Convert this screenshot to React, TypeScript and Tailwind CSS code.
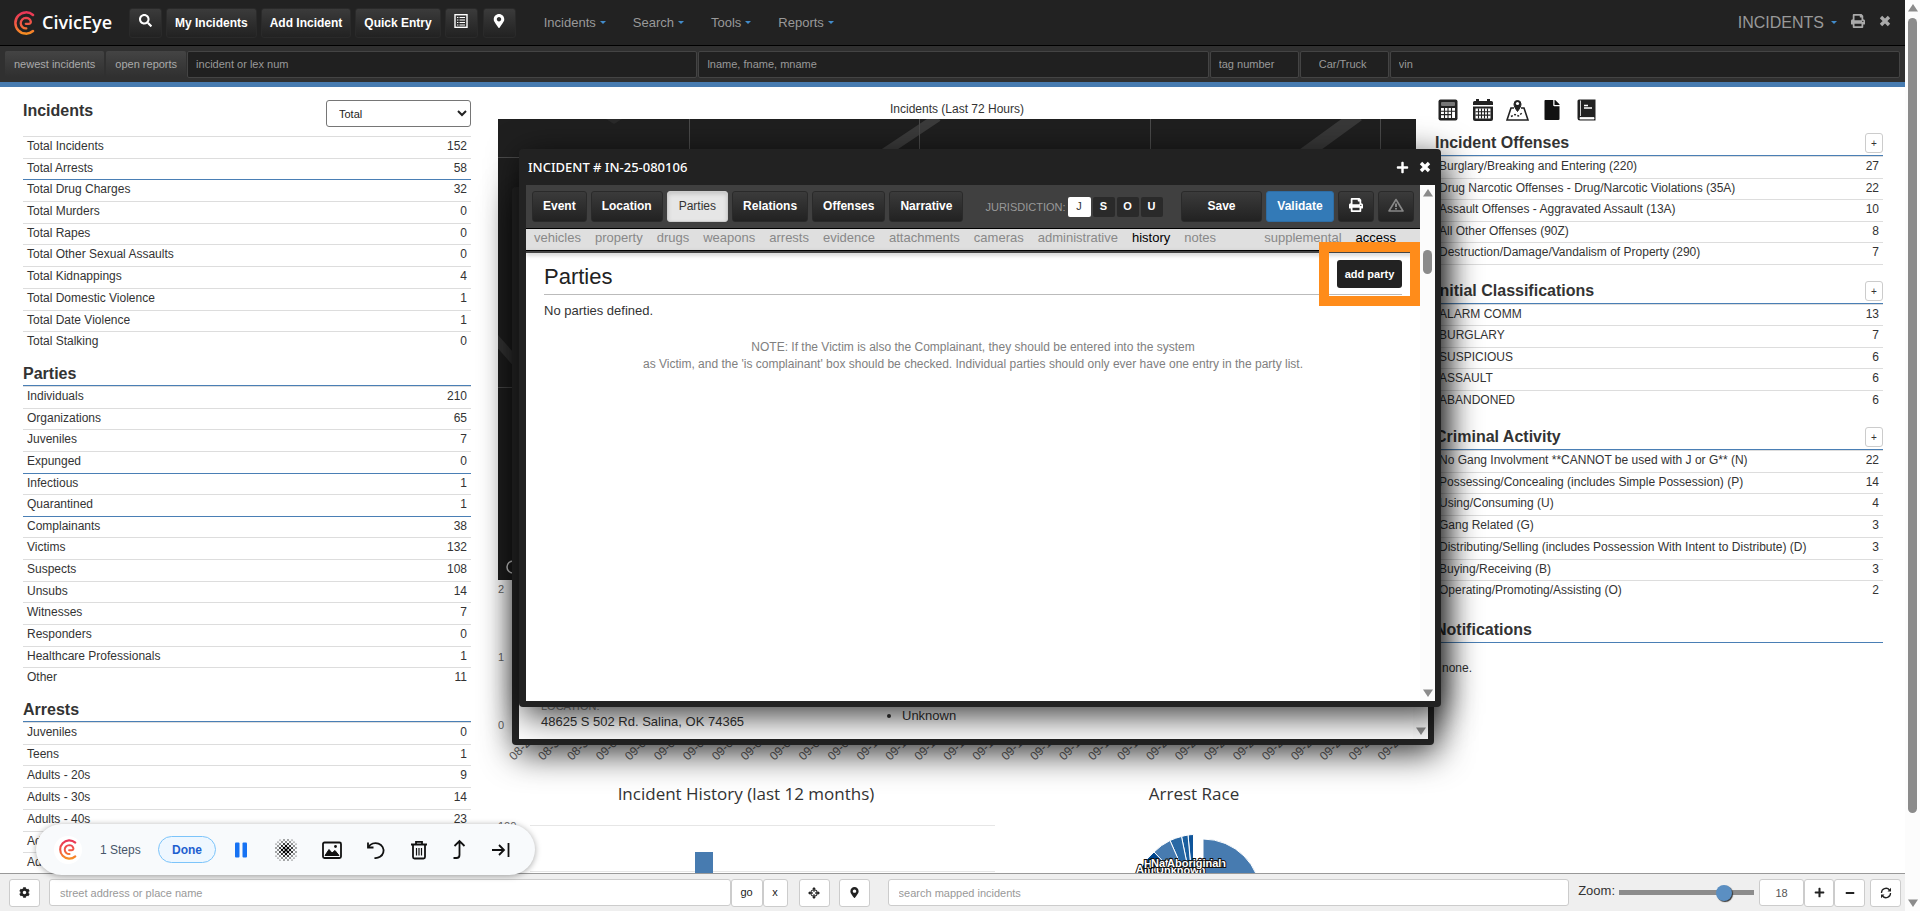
import React from "react";
import {
  FaSearch,
  FaMapMarkerAlt,
  FaPrint,
  FaPlus,
  FaMinus,
  FaCog,
  FaFile,
} from "react-icons/fa";

type Row = [label: string, value: number, accent?: boolean];

const incidentRows: Row[] = [
  ["Total Incidents", 152],
  ["Total Arrests", 58],
  ["Total Drug Charges", 32, true],
  ["Total Murders", 0],
  ["Total Rapes", 0],
  ["Total Other Sexual Assaults", 0],
  ["Total Kidnappings", 4],
  ["Total Domestic Violence", 1],
  ["Total Date Violence", 1],
  ["Total Stalking", 0],
];

const partyRows: Row[] = [
  ["Individuals", 210],
  ["Organizations", 65],
  ["Juveniles", 7],
  ["Expunged", 0],
  ["Infectious", 1, true],
  ["Quarantined", 1],
  ["Complainants", 38, true],
  ["Victims", 132],
  ["Suspects", 108],
  ["Unsubs", 14],
  ["Witnesses", 7],
  ["Responders", 0],
  ["Healthcare Professionals", 1],
  ["Other", 11],
];

const arrestRows: Row[] = [
  ["Juveniles", 0],
  ["Teens", 1],
  ["Adults - 20s", 9],
  ["Adults - 30s", 14],
  ["Adults - 40s", 23],
  ["Adults - 50s", 8],
  ["Adults - 60s", 3],
];

const offenseRows: Row[] = [
  ["Burglary/Breaking and Entering (220)", 27],
  ["Drug Narcotic Offenses - Drug/Narcotic Violations (35A)", 22],
  ["Assault Offenses - Aggravated Assault (13A)", 10],
  ["All Other Offenses (90Z)", 8],
  ["Destruction/Damage/Vandalism of Property (290)", 7],
];

const classificationRows: Row[] = [
  ["ALARM COMM", 13],
  ["BURGLARY", 7],
  ["SUSPICIOUS", 6],
  ["ASSAULT", 6],
  ["ABANDONED", 6],
];

const activityRows: Row[] = [
  ["No Gang Involvment **CANNOT be used with J or G** (N)", 22],
  ["Possessing/Concealing (includes Simple Possession) (P)", 14],
  ["Using/Consuming (U)", 4],
  ["Gang Related (G)", 3],
  ["Distributing/Selling (includes Possession With Intent to Distribute) (D)", 3],
  ["Buying/Receiving (B)", 3],
  ["Operating/Promoting/Assisting (O)", 2],
];

const chartDates = [
  "08-29", "08-30", "08-31",
  ...Array.from({ length: 28 }, (_, i) => "09-" + String(i + 1).padStart(2, "0")),
];

const darkButton =
  "flex items-center justify-center rounded-[3px] border border-[#2a2a2a] bg-linear-to-b from-[#3b3b3b] to-[#222] text-xs font-bold text-white";
const lightButton =
  "flex h-7 items-center justify-center rounded-[3px] border border-[#ccc] bg-white text-[11px] text-[#222]";

function Logo({ className }: { className: string }) {
  return (
    <svg viewBox="0 0 21 24" className={className} fill="none" strokeLinecap="round" aria-hidden="true">
      <defs>
        <linearGradient id="civic" gradientUnits="userSpaceOnUse" x1="0" y1="0" x2="0" y2="24">
          <stop offset="0" stopColor="#e8325a" />
          <stop offset="0.55" stopColor="#f15a44" />
          <stop offset="1" stopColor="#f7941e" />
        </linearGradient>
      </defs>
      <path d="M19 4A10.630 10.630 0 1 0 19 20" stroke="url(#civic)" strokeWidth="2.500" />
      <path
        d="M11.800 12.800H14.500Q17 12.800 16.800 10.600A5 5 0 0 0 12 6.900A5.400 5.400 0 0 0 6.700 12.400A5.200 5.200 0 0 0 12.300 17.300"
        stroke="url(#civic)"
        strokeWidth="2.300"
      />
    </svg>
  );
}

function Caret() {
  return (
    <svg viewBox="0 0 6 3" className="h-[3px] w-1.5" aria-hidden="true">
      <path d="M0 0H6L3 3Z" fill="#428bca" />
    </svg>
  );
}

function CrossIcon() {
  return (
    <svg viewBox="0 0 12 12" className="h-3 w-3" aria-hidden="true">
      <path d="M2 2L10 10M10 2L2 10" stroke="currentColor" strokeWidth="3.400" />
    </svg>
  );
}

function ScrollArrow({ down = false }: { down?: boolean }) {
  return (
    <svg viewBox="0 0 10 8" className="h-2 w-2.5 shrink-0" aria-hidden="true">
      <path d={down ? "M0 .5H10L5 8Z" : "M0 7.5H10L5 0Z"} fill="#8b8b8b" />
    </svg>
  );
}

function ListIcon() {
  return (
    <svg viewBox="0 0 14 14" className="h-3.5 w-3.5" fill="none" stroke="#fff" aria-hidden="true">
      <rect x="1" y=".7" width="12" height="12.6" strokeWidth="1.4" />
      <path d="M3 3.5H4.4M3 6H4.4M3 8.5H4.4M3 11H4.4M5.5 3.5H11M5.5 6H11M5.5 8.5H11M5.5 11H11" />
    </svg>
  );
}

function StatTable({ label, rows, height, closed = false }: { label: string; rows: Row[]; height: string; closed?: boolean }) {
  return (
    <table
      aria-label={label}
      className={`w-full border-separate border-spacing-0 text-xs leading-[18px] text-[#333] ${height} ${closed ? "border-b border-[#ddd]" : ""}`}
    >
      <tbody>
        {rows.map(([name, value, accent]) => {
          const line = accent ? "border-[#4a7fb5]" : "border-[#ddd]";
          return (
            <tr key={name}>
              <td className={`border-t py-0 pl-1 align-top ${line}`}>{name}</td>
              <td className={`border-t py-0 pr-1 text-right align-top ${line}`}>{value}</td>
            </tr>
          );
        })}
      </tbody>
    </table>
  );
}

function LeftHeading({ children }: { children: string }) {
  return (
    <h2 className="border-b border-[#4a7fb5] pt-[11px] pb-px text-base leading-5 font-bold text-[#333]">{children}</h2>
  );
}

function RightHeading({ title, expand = true }: { title: string; expand?: boolean }) {
  return (
    <div className="flex items-center justify-between border-b border-[#4a7fb5] pb-0.5">
      <h2 className="text-base leading-5 font-bold text-[#333]">{title}</h2>
      {expand && (
        <button
          type="button"
          aria-label={`Expand ${title}`}
          className="flex h-5 w-[18px] items-center justify-center rounded-[3px] border border-[#ccc] bg-white text-[10px] text-[#333]"
        >
          +
        </button>
      )}
    </div>
  );
}

function Header() {
  const field =
    "h-[27px] min-w-0 rounded-[2px] border border-[#444] bg-[#202020] px-2 text-[11px] text-[#999] outline-none placeholder:text-[#999]";
  return (
    <header>
      <div className="flex h-[46px] items-center border-b border-black bg-[#222] pl-3.5 pr-3.5">
        <Logo className="h-6 w-[21px]" />
        <span className="ml-[7px] w-[80px] font-['Open_Sans',sans-serif] text-[18px] font-semibold text-white">CivicEye</span>
        <div className="ml-[7px] flex items-center gap-1">
          <button type="button" aria-label="Search" className={`${darkButton} h-[30px] w-[33px] pb-1`}>
            <FaSearch size={13} />
          </button>
          <button type="button" className={`${darkButton} h-[30px] px-2`}>My Incidents</button>
          <button type="button" className={`${darkButton} h-[30px] px-2`}>Add Incident</button>
          <button type="button" className={`${darkButton} h-[30px] px-2`}>Quick Entry</button>
          <button type="button" aria-label="List" className={`${darkButton} h-[30px] w-[33px] pb-1`}>
            <ListIcon />
          </button>
          <button type="button" aria-label="Map" className={`${darkButton} ml-px h-[30px] w-[33px] pb-1`}>
            <FaMapMarkerAlt size={14} />
          </button>
        </div>
        <nav className="ml-7 flex gap-[27px] text-[13px] text-[#999]">
          {["Incidents", "Search", "Tools", "Reports"].map((item) => (
            <a key={item} href="#" className="flex items-center gap-1">
              {item}
              <Caret />
            </a>
          ))}
        </nav>
        <div className="ml-auto flex items-center text-[#999]">
          <a href="#" className="flex items-center gap-[7px] text-base">
            INCIDENTS
            <Caret />
          </a>
          <button type="button" aria-label="Print" className="ml-3.5 pb-1 text-[#aaa]">
            <FaPrint size={14} />
          </button>
          <button type="button" aria-label="Close" className="ml-3.5 pb-1 text-[#aaa]">
            <CrossIcon />
          </button>
        </div>
      </div>
      <div className="flex h-9 items-center gap-px bg-[#303030] px-[5px]">
        <button type="button" className="mr-px h-[26px] rounded-[2px] bg-linear-to-b from-[#444] to-[#303030] px-[9px] text-[11px] text-[#aaa]">
          newest incidents
        </button>
        <button type="button" className="h-[26px] rounded-[2px] bg-linear-to-b from-[#444] to-[#303030] px-[9px] text-[11px] text-[#aaa]">
          open reports
        </button>
        <input aria-label="incident or lex num" placeholder="incident or lex num" className={`${field} flex-1`} />
        <input aria-label="name" placeholder="lname, fname, mname" className={`${field} flex-1`} />
        <input aria-label="tag number" placeholder="tag number" className={`${field} w-[89px]`} />
        <select aria-label="vehicle type" className={`${field} w-[89px] appearance-none pl-[18px] text-[#888]`}>
          <option>Car/Truck</option>
        </select>
        <input aria-label="vin" placeholder="vin" className={`${field} flex-1`} />
      </div>
      <div className="h-[5px] bg-[#477bb0]" />
    </header>
  );
}

function MapView() {
  return (
    <svg viewBox="0 0 918 461" className="block w-full" preserveAspectRatio="none" role="img" aria-label="Incident map">
      <rect width="918" height="461" fill="#1f1f1f" />
      <g stroke="#353535" strokeWidth="9">
        <path d="M440 -2L380 38" stroke="#3b3b3b" />
        <path d="M860 -4L794 44" stroke="#383838" strokeWidth="13" />
        <path d="M-6 216L40 268" />
      </g>
      <path d="M108 0L116 5L124 0Z" fill="#2a2a2a" />
      <g stroke="#4a4a4a">
        <path d="M191.500 0V40M421.500 0V40M652.500 0V40M882.500 0V40M0 38.500H30M0 268.500H30" />
      </g>
      <circle cx="15" cy="448" r="6" fill="none" stroke="#ddd" strokeWidth="1.500" />
    </svg>
  );
}

function DailyChart() {
  return (
    <svg viewBox="0 0 918 196" className="block w-full font-['Liberation_Sans',sans-serif] text-[11px]" role="img" aria-label="Incidents per day">
      <g fill="#666">
        <text x="0" y="13">2</text>
        <text x="0" y="81">1</text>
        <text x="0" y="149">0</text>
        {chartDates.map((date, i) => {
          const x = 16 + i * 28.95;
          return (
            <text key={date} x={x} y="181" fontSize="12" transform={`rotate(-45 ${x} 181)`}>
              {date}
            </text>
          );
        })}
      </g>
    </svg>
  );
}

function HistoryChart() {
  return (
    <svg viewBox="0 0 500 130" className="block w-full" role="img" aria-label="Incident history">
      <text x="248" y="24" textAnchor="middle" fontSize="17" fill="#333" className="font-['Open_Sans',sans-serif]">
        Incident History (last 12 months)
      </text>
      <text x="0" y="54" fontSize="11" fill="#666" className="font-['Liberation_Sans',sans-serif]">100</text>
      <path d="M32 49.500H497M32 95.500H497" stroke="#e6e6e6" />
      <rect x="197" y="76" width="18" height="54" fill="#477bb0" />
    </svg>
  );
}

function RaceChart() {
  return (
    <svg viewBox="0 0 418 130" className="block w-full" role="img" aria-label="Arrest race">
      <text x="196" y="24" textAnchor="middle" fontSize="17" fill="#333" className="font-['Open_Sans',sans-serif]">
        Arrest Race
      </text>
      <g stroke="#fff" strokeWidth="1">
        <path d="M205 121V63A58 58 0 0 1 263 121Z" fill="#477bb0" />
        <path d="M195.500 117V58.500A59 59 0 0 0 190 59Z" fill="#0f559b" />
        <path d="M195 117L190 59A59 59 0 0 0 183.500 60.500Z" fill="#1b5f9f" />
        <path d="M195 117L183.500 60.500A59 59 0 0 0 172 64.500Z" fill="#2a69a5" />
        <path d="M195 117L172 64.500A59 59 0 0 0 156 76Z" fill="#477bb0" />
        <path d="M195 117L156 76A59 59 0 0 0 136 112V118Z" fill="#00468e" />
      </g>
      <g
        fill="#fff"
        stroke="#111"
        strokeWidth="2"
        paintOrder="stroke"
        fontSize="11"
        fontWeight="700"
        className="font-['Liberation_Sans',sans-serif]"
      >
        <text x="138" y="97">American</text>
        <text x="158" y="98">Unknown</text>
        <text x="228" y="91" textAnchor="end">Asian</text>
        <text x="146" y="92">H</text>
        <text x="153" y="91">Nat</text>
        <text x="169" y="91">Aboriginal</text>
      </g>
    </svg>
  );
}

function CalculatorIcon() {
  return (
    <svg viewBox="0 0 20 22" className="h-[22px] w-5" aria-hidden="true">
      <rect x=".5" y=".5" width="19" height="21" rx="2" fill="#222" />
      <rect x="3" y="3" width="14" height="4" rx="1" fill="#777" />
      <path d="M3 9H17V19H3Z" fill="#fff" />
      <path d="M6.500 9V19M10 9V19M13.500 9V19M3 12.300H17M3 15.600H13.500" stroke="#222" strokeWidth="1.100" />
    </svg>
  );
}

function CalendarIcon() {
  return (
    <svg viewBox="0 0 20 22" className="h-[22px] w-5" aria-hidden="true">
      <path d="M0 3.500Q0 2 1.500 2H3V0H6V2H14V0H17V2H18.500Q20 2 20 3.500V6H0Z" fill="#222" />
      <path d="M0 7.500H20V20Q20 22 18 22H2Q0 22 0 20Z" fill="#222" />
      <path d="M2.500 9.500H17.500V19.500H2.500Z" fill="#fff" />
      <path d="M5.500 9.500V19.500M8.500 9.500V19.500M11.500 9.500V19.500M14.500 9.500V19.500M2.500 12.800H17.500M2.500 16.100H17.500" stroke="#222" strokeWidth="1.100" />
    </svg>
  );
}

function MapPinIcon() {
  return (
    <svg viewBox="0 0 23 22" className="h-[22px] w-[23px]" fill="none" stroke="#222" aria-hidden="true">
      <path d="M8 9H5L1 21H22L18 9H15" strokeWidth="1.600" />
      <path d="M11.500 12.500C9 9 8 7 8 5A3.500 3.500 0 0 1 15 5C15 7 14 9 11.500 12.500Z" fill="#222" />
      <circle cx="11.500" cy="4.500" r="1.600" fill="#fff" stroke="none" />
      <path d="M5 17.500L9 15.500L12.500 17L16 14" strokeWidth="1.500" strokeDasharray="2 1.500" />
    </svg>
  );
}

function BookIcon() {
  return (
    <svg viewBox="0 0 19 22" className="h-[22px] w-[19px]" aria-hidden="true">
      <path d="M2 .5H18.500V21.500H3Q.5 21.500 .5 19V2Q.5 .5 2 .5Z" fill="#222" />
      <path d="M3.500 1.500V17M3 18.500H17V20H3Z" fill="#fff" stroke="#fff" strokeWidth=".8" />
      <path d="M7 6.500H11M7 9H15" stroke="#fff" strokeWidth="1.300" />
    </svg>
  );
}

function ModalFrame({
  title,
  children,
  className,
  thumb = false,
}: {
  title: string;
  children: React.ReactNode;
  className: string;
  thumb?: boolean;
}) {
  return (
    <section
      role="dialog"
      aria-label={title}
      className={`absolute flex h-[558px] w-[922px] flex-col rounded-[4px] bg-[#222] pb-1.5 shadow-[4px_8px_34px_rgba(0,0,0,0.8)] ${className}`}
    >
      <div className="flex h-9 shrink-0 items-center justify-between pr-2.5 pl-[9px] text-white">
        <h2 className="pt-0.5 font-['Noto_Sans',sans-serif] text-[13px] font-medium">{title}</h2>
        <div className="flex items-center gap-2.5">
          <button type="button" aria-label="New window">
            <FaPlus size={13} />
          </button>
          <button type="button" aria-label="Close window">
            <CrossIcon />
          </button>
        </div>
      </div>
      <div className="mr-1.5 ml-[7px] flex min-h-0 flex-1 bg-white">
        <div className="flex min-w-0 flex-1 flex-col">{children}</div>
        <div className="flex w-[15px] flex-col items-center justify-between bg-[#fcfcfc] py-1">
          <ScrollArrow />
          {thumb && <span className="mt-[53px] mb-auto h-6 w-[9px] rounded-full bg-[#8b8b8b]" />}
          <ScrollArrow down />
        </div>
      </div>
    </section>
  );
}

function EventModal() {
  return (
    <ModalFrame title="EVENT" className="top-[187px] left-[512px]">
      <div className="h-[43px] shrink-0 bg-[#404040]" />
      <div className="mt-auto flex items-end pb-[5px] pl-[22px] text-[13px] leading-4 text-[#333]">
        <div className="w-[345px]">
          <p className="text-[11px] text-[#888]">LOCATION:</p>
          <p className="pb-1">48625 S 502 Rd. Salina, OK 74365</p>
        </div>
        <ul className="list-disc pb-2.5 pl-4">
          <li>Unknown</li>
        </ul>
      </div>
    </ModalFrame>
  );
}

function IncidentModal() {
  const tabs = ["Event", "Location", "Parties", "Relations", "Offenses", "Narrative"];
  const links = [
    "vehicles", "property", "drugs", "weapons", "arrests", "evidence",
    "attachments", "cameras", "administrative", "history", "notes",
  ];
  return (
    <ModalFrame title="INCIDENT # IN-25-080106" className="top-[149px] left-[519px]" thumb>
      <div className="flex h-11 shrink-0 items-center border-b border-black bg-[#404040] px-1.5">
        <div className="flex gap-1">
          {tabs.map((tab) =>
            tab === "Parties" ? (
              <button
                key={tab}
                type="button"
                aria-current="page"
                className="h-[31px] rounded-[3px] border border-[#ccc] bg-[#e6e6e6] px-[11px] pb-0.5 text-xs font-medium text-[#333] shadow-[inset_0_2px_4px_rgba(0,0,0,0.15)]"
              >
                {tab}
              </button>
            ) : (
              <button key={tab} type="button" className={`${darkButton} h-[31px] px-2.5 pb-0.5`}>
                {tab}
              </button>
            ),
          )}
        </div>
        <div className="ml-[22px] flex items-center gap-0.5 text-[11px]">
          <span className="pt-0.5 text-[#999]">JURISDICTION:</span>
          <button type="button" className="h-5 w-[23px] rounded-[2px] bg-white text-[#333]">J</button>
          {["S", "O", "U"].map((code) => (
            <button key={code} type="button" className="h-5 w-[22px] rounded-[2px] bg-[#2a2a2a] font-bold text-white">
              {code}
            </button>
          ))}
        </div>
        <div className="ml-auto flex gap-1">
          <button type="button" className={`${darkButton} h-[31px] w-[81px] pb-0.5`}>Save</button>
          <button type="button" className="h-[31px] w-[68px] rounded-[3px] border border-[#2e6da4] bg-[#337ab7] pb-0.5 text-xs font-bold text-white">
            Validate
          </button>
          <button type="button" aria-label="Print" className={`${darkButton} h-[31px] w-9 pb-1`}>
            <FaPrint size={14} />
          </button>
          <button type="button" aria-label="Warnings" className={`${darkButton} h-[31px] w-9 pb-1`}>
            <svg viewBox="0 0 16 14" className="h-3.5 w-4" fill="none" stroke="#888" aria-hidden="true">
              <path d="M8 1.500L15 13H1Z" strokeWidth="1.600" strokeLinejoin="round" />
              <path d="M8 5.500V9M8 10V11.500" strokeWidth="2" />
            </svg>
          </button>
        </div>
      </div>
      <nav className="flex h-[21px] shrink-0 gap-3.5 bg-[#dfdfdf] pr-6 pl-2 text-[13px] leading-[17px] text-[#888]">
        {links.map((link) => (
          <a key={link} href="#" className={link === "history" ? "text-black" : ""}>
            {link}
          </a>
        ))}
        <a href="#" className="ml-auto">supplemental</a>
        <a href="#" className="text-black">access</a>
      </nav>
      <div className="h-[3px] shrink-0 border-t border-black bg-[#444] shadow-[0_2px_4px_rgba(0,0,0,0.25)]" />
      <div className="pr-[18px] pl-[18px]">
        <div className="flex items-start justify-between border-b border-[#bbb] pt-[7px] pb-[5px]">
          <h3 className="pt-[5px] text-[22px] leading-6 text-[#222]">Parties</h3>
          <div className="relative h-7">
            <button type="button" className="h-7 w-[65px] rounded-[3px] bg-[#222] text-[11px] font-bold text-white">
              add party
            </button>
            <span className="pointer-events-none absolute -inset-[18px] border-[10px] border-[#ff8c1a]" />
          </div>
        </div>
        <p className="pt-[7px] text-[13px] leading-[18px] text-[#333]">No parties defined.</p>
        <p className="pt-[19px] text-center text-xs leading-[17px] text-[#808080]">
          NOTE: If the Victim is also the Complainant, they should be entered into the system
          <br />
          as Victim, and the 'is complainant' box should be checked. Individual parties should only ever have one entry in the party list.
        </p>
      </div>
    </ModalFrame>
  );
}

function DotsIcon() {
  const dots: React.ReactNode[] = [];
  for (let r = 0; r < 11; r++) {
    for (let c = 0; c < 11; c++) {
      const d = Math.hypot(r - 5, c - 5);
      if (d > 6 || (r + c) % 2) continue;
      dots.push(<circle key={`${r}-${c}`} cx={c * 2 + 1} cy={r * 2 + 1} r={1.55 - d * 0.18} />);
    }
  }
  return (
    <svg viewBox="0 0 22 22" className="h-[22px] w-[22px]" aria-hidden="true">
      {dots}
    </svg>
  );
}

function RecorderBar() {
  const stroke = {
    viewBox: "0 0 22 22",
    className: "h-[22px] w-[22px]",
    fill: "none",
    stroke: "#111",
    strokeWidth: 1.8,
    "aria-hidden": true,
  } as const;
  return (
    <div className="absolute bottom-9 left-9 flex h-[51px] w-[499px] items-center rounded-full bg-[#f8fafc] pl-[18px] shadow-[0_1px_6px_rgba(0,0,0,0.35)]">
      <span className="flex h-7 w-7 items-center justify-center rounded-full bg-white">
        <Logo className="h-[21px] w-[18px]" />
      </span>
      <span className="ml-[18px] w-[44px] text-xs whitespace-nowrap text-[#475569]">1 Steps</span>
      <button type="button" className="ml-3.5 h-[27px] w-[58px] rounded-full border border-[#7cc4fa] bg-[#eef7ff] text-xs font-bold text-[#1d5fd0]">
        Done
      </button>
      <div className="ml-3.5 flex items-center">
        <button type="button" aria-label="Pause" className="w-[22px]">
          <svg viewBox="0 0 22 22" className="h-[22px] w-[22px]" fill="#1672f3" aria-hidden="true">
            <rect x="5" y="3.500" width="4.500" height="15" rx="1" />
            <rect x="12.500" y="3.500" width="4.500" height="15" rx="1" />
          </svg>
        </button>
        <button type="button" aria-label="Blur" className="ml-[23px] w-[22px]">
          <DotsIcon />
        </button>
        <button type="button" aria-label="Image" className="ml-6 w-[22px]">
          <svg {...stroke}>
            <rect x="2" y="3.500" width="18" height="15.500" rx="1.500" />
            <path d="M4 16.500L8 10.500L11 14L14 11.500L18 16.500Z" fill="#111" strokeWidth="1" />
            <circle cx="14.500" cy="7.500" r="1.400" fill="#111" stroke="none" />
          </svg>
        </button>
        <button type="button" aria-label="Undo" className="ml-[22px] w-[22px]">
          <svg {...stroke}>
            <path d="M3 3.500V8.500H8.500" />
            <path d="M3.500 8A8 7.500 0 1 1 9.500 19" />
          </svg>
        </button>
        <button type="button" aria-label="Delete" className="ml-[21px] w-[22px]">
          <svg {...stroke}>
            <path d="M3 5.500H19M8 5V2.800H14V5M5 6V18Q5 19.500 6.500 19.500H15.500Q17 19.500 17 18V6" />
            <path d="M8.500 9V16.500M11 9V16.500M13.500 9V16.500" strokeWidth="1.200" />
          </svg>
        </button>
        <button type="button" aria-label="Move up" className="ml-[18px] w-[22px]">
          <svg {...stroke}>
            <path d="M6.500 7L11.500 2L16.500 7M11.500 2.500V16Q11.500 19 8.500 19H5.500" />
          </svg>
        </button>
        <button type="button" aria-label="Collapse" className="ml-5 w-[22px]">
          <svg {...stroke}>
            <path d="M2 11H14M9 6L14 11L9 16M18.500 4V18" />
          </svg>
        </button>
      </div>
    </div>
  );
}

function Footer() {
  const field =
    "h-[27px] min-w-0 rounded-[3px] border border-[#ccc] bg-white px-2.5 text-[11px] text-[#555] outline-none placeholder:text-[#999]";
  return (
    <footer className="flex h-[38px] shrink-0 items-center border-t border-[#999] bg-[#efefef] pr-1 pl-[9px]">
      <button type="button" aria-label="Settings" className={`${lightButton} w-[31px]`}>
        <FaCog size={11} />
      </button>
      <input aria-label="street address or place name" placeholder="street address or place name" className={`${field} ml-[9px] flex-1`} />
      <button type="button" className={`${lightButton} w-8`}>go</button>
      <button type="button" className={`${lightButton} w-[25px]`}>x</button>
      <button type="button" aria-label="Locate" className={`${lightButton} ml-[11px] w-[31px]`}>
        <svg viewBox="0 0 12 12" className="h-3 w-3" fill="none" stroke="#222" aria-hidden="true">
          <circle cx="6" cy="6" r="3.200" strokeWidth="1.100" />
          <path d="M6 1V4.800M6 7.200V11M1 6H4.800M7.200 6H11" strokeWidth="1.300" />
          <path d="M6 0L7.800 2H4.200ZM6 12L7.800 10H4.200ZM0 6L2 4.200V7.800ZM12 6L10 4.200V7.800Z" fill="#222" stroke="none" />
        </svg>
      </button>
      <button type="button" aria-label="Drop pin" className={`${lightButton} ml-[9px] w-[31px]`}>
        <FaMapMarkerAlt size={11} />
      </button>
      <input aria-label="search mapped incidents" placeholder="search mapped incidents" className={`${field} ml-[18px] flex-1`} />
      <label htmlFor="zoom" className="ml-[9px] pb-1 text-[13px] text-[#333]">Zoom:</label>
      <input
        id="zoom"
        type="range"
        min={0}
        max={22}
        defaultValue={18}
        className="ml-1 h-[5px] w-[135px] appearance-none bg-[#8c8c8c] [&::-webkit-slider-thumb]:h-4 [&::-webkit-slider-thumb]:w-4 [&::-webkit-slider-thumb]:appearance-none [&::-webkit-slider-thumb]:rounded-full [&::-webkit-slider-thumb]:bg-[#5b8fc2] [&::-webkit-slider-thumb]:shadow-[1px_1px_1px_#333]"
      />
      <input aria-label="zoom level" defaultValue="18" className={`${field} ml-[5px] w-[45px] text-center`} />
      <button type="button" aria-label="Zoom in" className={`${lightButton} w-[30px]`}>
        <FaPlus size={11} />
      </button>
      <button type="button" aria-label="Zoom out" className={`${lightButton} w-[31px]`}>
        <FaMinus size={10} />
      </button>
      <button type="button" aria-label="Refresh" className={`${lightButton} ml-[5px] w-[31px]`}>
        <svg viewBox="0 0 12 12" className="h-3 w-3" fill="none" stroke="#222" strokeWidth="1.300" aria-hidden="true">
          <path d="M1.500 6A4.500 4.500 0 0 1 9.500 3M10.500 6A4.500 4.500 0 0 1 2.500 9" />
          <path d="M11 .8V4.500H7.500ZM1 11.200V7.500H4.500Z" fill="#222" stroke="none" />
        </svg>
      </button>
    </footer>
  );
}

export default function App() {
  return (
    <div className="relative flex h-screen overflow-hidden bg-white font-['Liberation_Sans',Arial,sans-serif]">
      <div className="flex min-w-0 flex-1 flex-col">
        <Header />
        <main className="grid min-h-0 flex-1 grid-cols-[475fr_945fr_485fr] overflow-hidden">
          <div className="pr-1 pl-[23px]">
            <div className="flex items-start justify-between pt-[13px] pb-[9px]">
              <h2 className="pt-px text-base leading-5 font-bold text-[#333]">Incidents</h2>
              <select
                aria-label="Incident period"
                className="h-[27px] w-[145px] rounded-[3px] border border-[#767676] bg-white pl-2 text-[11px] font-medium text-[#222]"
              >
                <option>Total</option>
              </select>
            </div>
            <StatTable label="Incidents" rows={incidentRows} height="h-[217px]" />
            <LeftHeading>Parties</LeftHeading>
            <StatTable label="Parties" rows={partyRows} height="h-[303px]" />
            <LeftHeading>Arrests</LeftHeading>
            <StatTable label="Arrests" rows={arrestRows} height="h-[152px]" />
          </div>

          <div className="min-w-0 pr-1 pl-[23px]">
            <h2 className="pt-[13px] pb-px text-center text-xs leading-[18px] text-[#333]">Incidents (Last 72 Hours)</h2>
            <MapView />
            <DailyChart />
            <div className="grid grid-cols-[500fr_418fr]">
              <HistoryChart />
              <RaceChart />
            </div>
          </div>

          <div className="flex flex-col gap-4 pr-[22px] pl-[15px]">
            <div className="-mb-1 flex items-center gap-[15px] pt-3 pl-[3px]">
              <a href="#" aria-label="Calculator"><CalculatorIcon /></a>
              <a href="#" aria-label="Calendar"><CalendarIcon /></a>
              <a href="#" aria-label="Map" className="-mx-0.5"><MapPinIcon /></a>
              <a href="#" aria-label="Document"><FaFile size={20} color="#111" /></a>
              <a href="#" aria-label="Book"><BookIcon /></a>
            </div>
            <section>
              <RightHeading title="Incident Offenses" />
              <StatTable label="Incident Offenses" rows={offenseRows} height="h-[109px]" closed />
            </section>
            <section>
              <RightHeading title="Initial Classifications" />
              <StatTable label="Initial Classifications" rows={classificationRows} height="h-[107px]" />
            </section>
            <section>
              <RightHeading title="Criminal Activity" />
              <StatTable label="Criminal Activity" rows={activityRows} height="h-[152px]" />
            </section>
            <section className="pt-0.5">
              <RightHeading title="Notifications" expand={false} />
              <p className="mt-[15px] pl-[7px] text-xs leading-5 text-[#333]">none.</p>
            </section>
          </div>
        </main>
        <Footer />
      </div>

      <div className="flex w-[15px] shrink-0 flex-col items-center gap-1.5 bg-[#fcfcfc] pt-1 pb-1">
        <ScrollArrow />
        <span className="h-[88%] w-[9px] rounded-full bg-[#8b8b8b]" />
        <span className="flex-1" />
        <ScrollArrow down />
      </div>

      <EventModal />
      <IncidentModal />
      <RecorderBar />
    </div>
  );
}
